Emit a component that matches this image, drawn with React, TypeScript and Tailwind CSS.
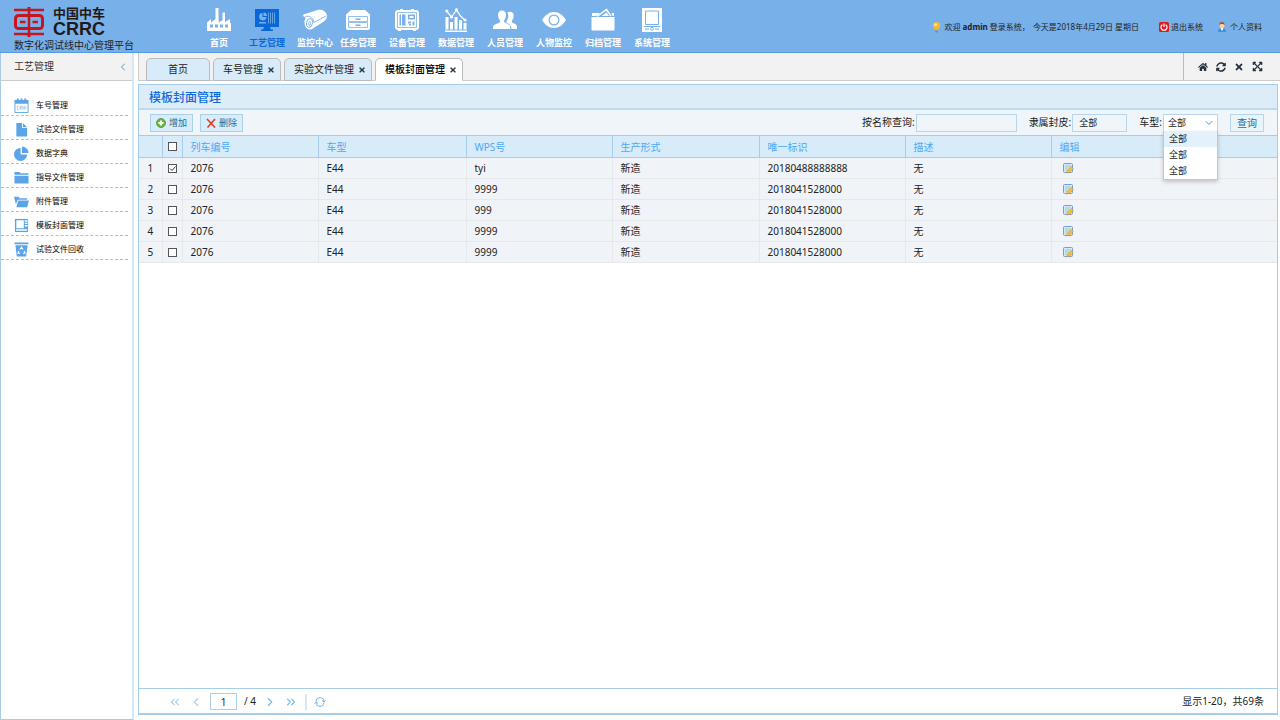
import { useState } from "react";
import type { ReactNode } from "react";
import { FaExpandArrowsAlt, FaHome, FaSyncAlt, FaTimes } from "react-icons/fa";
import { ChevronDown, ChevronLeft, ChevronRight, ChevronsLeft, ChevronsRight } from "lucide-react";

interface Item {
  label: string;
  icon: ReactNode;
}

/* ---------- header icons, 24 x 24 ---------- */

const mainNav: Item[] = [
  {
    label: "首页",
    icon: (
      <path
        fillRule="evenodd"
        d="M0 23v-8.500L4 11v3.500L8.500 11V0h3v11l.5 3.500 3.500-2.500V4.500H18V14l5-3v3.500l1 1V23zM3 16.500v3h3v-3zm5 0v3h3v-3zm5 0v3h3v-3zm5 0v3h3v-3z"
      />
    ),
  },
  {
    label: "工艺管理",
    icon: (
      <>
        <path d="M0 1h24v18H0zM9 19h6l1 2.500h2V23H6v-1.500h2z" />
        <path d="M8.500 4.500V8H12a3.500 3.500 0 0 0-3.500-3.500zM7.500 5a3.700 3.700 0 1 0 4 4h-4zM4 14h7v1.500H4z" fill="#78b0ea" />
        <path d="M13.500 4.500v11M15.500 4.500v11M17.500 4.500v11M19.500 4.500v11" stroke="#78b0ea" strokeWidth=".8" />
      </>
    ),
  },
  {
    label: "监控中心",
    icon: (
      <>
        <path d="M.5 6.500 14.500 2c4-1 8.500 1 9.300 5 .5 2.500-.5 4.500-3 6.500L10 20.500C7 23 2 21 1.500 15.500c-.2-2 .2-4 1.200-6L0 8z" />
        <path d="M2.500 8.500C6 7.500 10 9 11 14.500L23 8" fill="none" stroke="#78b0ea" strokeWidth=".9" />
        <ellipse cx="6.500" cy="15" rx="3" ry="4.500" fill="none" stroke="#78b0ea" strokeWidth=".9" transform="rotate(12 6.500 15)" />
        <ellipse cx="6.500" cy="15.500" rx="1" ry="2" fill="none" stroke="#78b0ea" strokeWidth=".8" transform="rotate(12 6.500 15.500)" />
      </>
    ),
  },
];

const manageNav: Item[] = [
  {
    label: "任务管理",
    icon: (
      <>
        <path d="M5 2h14l5 4.500V20a2 2 0 0 1-2 2H2a2 2 0 0 1-2-2V6.500z" />
        <path d="M2.500 8.500h19v5h-19zM2.500 14.500h19v5h-19z" fill="none" stroke="#78b0ea" strokeWidth=".8" />
        <path d="M9.500 10.500h5v1.500h-5zM9.500 16.500h5V18h-5z" fill="#78b0ea" />
      </>
    ),
  },
  {
    label: "设备管理",
    icon: (
      <>
        <path d="M3 2h2V1h3v1h8V1h3v1h2a3 3 0 0 1 3 3v14a3 3 0 0 1-3 3v1h-3v-1H6v1H3v-1a3 3 0 0 1-3-3V5a3 3 0 0 1 3-3z" />
        <path d="M2.500 4.500h19v15h-19z" fill="none" stroke="#78b0ea" strokeWidth=".8" />
        <path d="M4.500 6.500H6v11H4.500zM7 6.500h3.500v11H7zM13 6.500h7v5h-7zM13 13.500h3v2h-3zM17.500 13.500h2v4h-2zM14 16h2v1.500h-2z" fill="#78b0ea" />
        <path d="M14.500 8h4v2h-4z" />
      </>
    ),
  },
  {
    label: "数据管理",
    icon: (
      <>
        <path d="M1.500 9h3v12.500h-3zM6 14h3v7.500H6zM10.500 9h3v12.500h-3zM15 12h3v9.500h-3zM19.500 15h3v6.500h-3zM1 22.500h22V24H1z" />
        <path d="m2.500 3 5 6 5-7 4 6 4.500 4" fill="none" stroke="currentColor" strokeWidth="1.200" />
        <circle cx="2.800" cy="3" r="1.600" />
        <circle cx="7.500" cy="9" r="1.600" />
        <circle cx="12.500" cy="2" r="1.700" />
        <circle cx="21" cy="12" r="1.600" />
      </>
    ),
  },
  {
    label: "人员管理",
    icon: (
      <>
        <path d="M9 2.500c2.800 0 4.300 2 4 5-.2 2-.8 3.500-1.800 4.500v2c1 1.500 5.300 1.800 5.800 4l.4 3H0c0-3 .3-4 3-5 2-.8 3.500-1.200 4-2.200V12C5.800 11 5.200 9.500 5 7.500c-.2-3 1.300-5 4-5z" />
        <path d="M14.500 4.500c1-.8 2-1 3-.8 2.300.3 3.500 2 3.200 4.500-.2 1.800-.7 3-1.700 4v1.700c.8 1.400 4.700 1.600 5 4.300v2.800h-5.500c0-3.500-1.500-4.700-5-6.300v-1.700c1.200-1.500 1.900-3.500 1.900-5.500z" />
      </>
    ),
  },
  {
    label: "人物监控",
    icon: (
      <>
        <path fillRule="evenodd" d="M0 12C3 7 7 4 12 4s9 3 12 8c-3 5-7 8-12 8S3 17 0 12zm12-5.500a5.500 5.500 0 1 0 0 11 5.500 5.500 0 0 0 0-11z" />
        <circle cx="12" cy="12" r="4.300" />
      </>
    ),
  },
  {
    label: "归档管理",
    icon: (
      <>
        <path d="M.5 9h23v12.500a1 1 0 0 1-1 1h-21a1 1 0 0 1-1-1z" />
        <path d="M1 8V5h8L7.500 6.500 5 8zM20.500 5h2.500v3h-1.500z" />
        <path d="M6 8.500 15.500 1.500 20 8" fill="none" stroke="currentColor" strokeWidth="1.500" />
        <path d="m10.500 8 5-3.500L18 8z" />
      </>
    ),
  },
  {
    label: "系统管理",
    icon: (
      <>
        <path d="M2 0h20v24H2z" />
        <path d="M5.500 3h13v13.500h-13zM4 18.500h16M5 21h4m6 0h4" fill="none" stroke="#78b0ea" />
        <circle cx="12" cy="20.800" r="1.500" fill="none" stroke="#78b0ea" />
      </>
    ),
  },
];

/* ---------- sidebar icons, 16 x 16 ---------- */

const menuItems: Item[] = [
  {
    label: "车号管理",
    icon: (
      <>
        <path d="M.5 2H3V.5h2V2h2V.5h2V2h2V.5h2V2h2.500v4H.5z" />
        <path d="M1 6v9.500h14V6" fill="none" stroke="currentColor" />
        <path d="M5 8.500H3.500v4H5m1.500 0v-4H8v2H6.500L8 12.500m1.500 0v-4m0 2h1.500m0-2v4m1.500 0v-4" fill="none" stroke="currentColor" strokeWidth=".5" />
      </>
    ),
  },
  {
    label: "试验文件管理",
    icon: <path d="M2.500 1h6v5.500h5.500v9H2.500zM9.500 1 14 5.500H9.500z" />,
  },
  {
    label: "数据字典",
    icon: <path d="M7 2v7h7a7 7 0 1 1-7-7zM8.500.5A7 7 0 0 1 15.500 7.500h-7z" />,
  },
  {
    label: "指导文件管理",
    icon: <path d="M.5 2h5.500l1 1.500h8.500V5H.5zM.5 6h15v8.500H.5z" />,
  },
  {
    label: "附件管理",
    icon: <path d="M0 3h5l1 1.500h8V6H4l-2 5zM4.500 7H16l-2 7H2.500z" />,
  },
  {
    label: "模板封面管理",
    icon: (
      <>
        <path d="M1 1h14v14H1z" />
        <path d="M2.500 2.500h8V11h-8zM2 12h12v1.500H2zM11.500 2.500h3V4h-3zM11.500 5h3v1.500h-3zM11.500 7.500h3V9h-3z" fill="#fff" />
      </>
    ),
  },
  {
    label: "试验文件回收",
    icon: (
      <>
        <path d="M.5.5h15v2H.5zM1.500 3.500h13l-1.500 12H3z" />
        <path d="m6.300 8 1.700-2.500L9.700 8M10.800 9.500l1 2.500H9.500m-3 0H4.200l1-2.500" fill="none" stroke="#fff" strokeWidth="1.200" />
      </>
    ),
  },
];

const tabs = [
  { label: "首页", closable: false },
  { label: "车号管理", closable: true },
  { label: "实验文件管理", closable: true },
  { label: "模板封面管理", closable: true },
];

const columns = [
  { label: "列车编号", width: "w-[136px]" },
  { label: "车型", width: "w-[148px]" },
  { label: "WPS号", width: "w-[146px]" },
  { label: "生产形式", width: "w-[147px]" },
  { label: "唯一标识", width: "w-[146px]" },
  { label: "描述", width: "w-[146px]" },
  { label: "编辑", width: "" },
];

const rows = [
  ["2076", "E44", "tyi", "新造", "20180488888888", "无"],
  ["2076", "E44", "9999", "新造", "2018041528000", "无"],
  ["2076", "E44", "999", "新造", "2018041528000", "无"],
  ["2076", "E44", "9999", "新造", "2018041528000", "无"],
  ["2076", "E44", "9999", "新造", "2018041528000", "无"],
];

function Logo() {
  return (
    <svg viewBox="0 0 30 30" className="size-[30px]" fill="none" stroke="#c8141e">
      <path d="M0 3h30M0 27h30" strokeWidth="2.500" />
      <path d="M15 0v4M15 26v4" strokeWidth="3" />
      <rect x="1.500" y="8.500" width="27" height="13" rx="3" strokeWidth="3" />
      <path d="M6 15h5.500M18.500 15H24" strokeWidth="2.500" />
      <path d="M15 4v22" strokeWidth="2.500" />
    </svg>
  );
}

function EditIcon() {
  return (
    <svg viewBox="0 0 11 11" className="size-[11px]">
      <rect x=".5" y=".5" width="9" height="9" rx="1" fill="#d5e8fa" stroke="#6f9fd8" />
      <path d="M2 3h6M2 5h5M2 7h3" stroke="#a4cf9a" strokeWidth="1" />
      <path d="m3.500 10 1-2.500 4-4L10.500 5.500l-4 4z" fill="#f8bd3f" stroke="#b07a2a" strokeWidth=".4" />
    </svg>
  );
}

function CheckBox({ label, checked, onChange }: { label: string; checked: boolean; onChange: () => void }) {
  return (
    <span className="relative mx-auto block size-[9px]">
      <input
        type="checkbox"
        aria-label={label}
        checked={checked}
        onChange={onChange}
        className="block size-[9px] appearance-none border border-[#555] bg-white"
      />
      {checked && (
        <svg viewBox="0 0 9 9" className="pointer-events-none absolute inset-0" fill="none" stroke="#333">
          <path d="m2 4.500 2 2 3.500-4" />
        </svg>
      )}
    </span>
  );
}

function NavGroup({ items, className }: { items: Item[]; className: string }) {
  return (
    <div className={`flex ${className}`}>
      {items.map((item) => (
        <a
          key={item.label}
          href="#"
          className={`flex w-9 flex-col items-center ${item.label === "工艺管理" ? "text-[#0968d8]" : "text-white"}`}
        >
          <svg viewBox="0 0 24 24" className="size-6" fill="currentColor">
            {item.icon}
          </svg>
          <span className="mt-1 whitespace-nowrap text-[9px] font-bold leading-[14px]">{item.label}</span>
        </a>
      ))}
    </div>
  );
}

function Header() {
  return (
    <header className="flex h-[53px] shrink-0 border-b border-[#5599e4] bg-[#78b0ea]">
      <div className="w-[201px] shrink-0 pl-[14px] pt-[7px]">
        <div className="flex h-[30px] gap-[9px]">
          <Logo />
          <div className="text-[#231815]">
            <div className="font-['Noto_Sans_CJK_SC'] text-[13px] font-bold leading-[12px]">中国中车</div>
            <div className="font-['Liberation_Sans'] text-[18px] font-bold leading-[20px]">CRRC</div>
          </div>
        </div>
        <div className="whitespace-nowrap text-[10px] leading-[16px] text-[#222]">数字化调试线中心管理平台</div>
      </div>

      <nav className="flex gap-[7px] pt-2">
        <NavGroup items={mainNav} className="gap-3" />
        <NavGroup items={manageNav} className="gap-[13px]" />
      </nav>

      <div className="ml-auto flex items-center whitespace-nowrap pr-[18px] pt-0.5 text-[8px] text-[#222]">
        <svg viewBox="0 0 10 12" className="mr-[3px] h-[11px] w-[9px]">
          <path d="M5 0a4 4 0 0 1 4 4c0 2-2 3-2 4.500H3C3 7 1 6 1 4a4 4 0 0 1 4-4z" fill="#fdb827" />
          <circle cx="4" cy="3" r="1.500" fill="#fff0a0" />
          <path d="M3.300 9h3.400v2L5 12l-1.700-1z" fill="#8a8f96" />
        </svg>
        <span className="mr-[3px]">
          欢迎 <b>admin</b> 登录系统，
        </span>
        <span>今天是2018年4月29日 星期日</span>
        <a href="#" className="ml-5 flex items-center gap-[2px]">
          <svg viewBox="0 0 10 10" className="size-[10px]" fill="none" stroke="#fff" strokeWidth="1.200">
            <rect width="10" height="10" rx="1.500" fill="#dc1c1c" stroke="none" />
            <path d="M3.300 2.800a3 3 0 1 0 3.400 0M5 1.500V5" />
          </svg>
          退出系统
        </a>
        <a href="#" className="ml-[14px] flex items-center gap-[3px]">
          <svg viewBox="0 0 10 10" className="size-[10px]">
            <path d="M.8 10c0-3 1.700-4 4.200-4s4.200 1 4.200 4z" fill="#4a90d9" />
            <path d="m3.500 6 1.500 3 1.500-3z" fill="#fff" />
            <circle cx="5" cy="3.400" r="2.500" fill="#fbd3a4" />
            <path d="M2.400 3.500C2.200 1 3.500 0 5 0s2.800 1 2.600 3.500C7 2 6 2 5 2s-2 0-2.600 1.500z" fill="#a5521b" />
          </svg>
          个人资料
        </a>
      </div>
    </header>
  );
}

function Sidebar() {
  return (
    <aside className="flex w-[134px] shrink-0 flex-col border-b border-l border-r-2 border-b-[#a5cdeb] border-l-[#a5cdeb] border-r-[#d4e8f6]">
      <div className="flex h-7 items-center justify-between border-b border-[#ccc] bg-[#f2f2f2] pl-[13px] pr-[3px]">
        <h2 className="text-[10px] text-[#333]">工艺管理</h2>
        <button type="button" aria-label="收起菜单" className="text-[#4a9be8]">
          <ChevronLeft size={12} />
        </button>
      </div>
      <ul className="mr-1 mt-[11px]">
        {menuItems.map((item) => (
          <li key={item.label} className="border-b border-dashed border-[#bbb]">
            <a href="#" className="flex h-[23px] items-center gap-[7px] pl-[13px] pt-[3px] text-[8px] text-black">
              <svg viewBox="0 0 16 16" className="size-[15px] text-[#5ba4e8]" fill="currentColor">
                {item.icon}
              </svg>
              {item.label}
            </a>
          </li>
        ))}
      </ul>
    </aside>
  );
}

function TabBar() {
  const [active, setActive] = useState("模板封面管理");

  return (
    <div className="flex h-7 shrink-0 items-stretch border-b border-l border-[#ccc] bg-[#f2f2f2]">
      <div role="tablist" className="-mb-px flex gap-[3px] pl-[7px] pt-[5px]">
        {tabs.map((tab) => (
          <div
            key={tab.label}
            className={`flex items-center rounded-t-[5px] border border-[#bbb] text-[10px] ${
              tab.label === active ? "border-b-white bg-white font-medium text-black" : "bg-[#d8ebf8] text-[#222]"
            } ${tab.closable ? "gap-[4px] pl-[9px] pr-[5px]" : "px-[21px]"}`}
          >
            <button type="button" role="tab" aria-selected={tab.label === active} onClick={() => setActive(tab.label)}>
              {tab.label}
            </button>
            {tab.closable && (
              <button type="button" aria-label={`关闭${tab.label}`} className="text-[#2b3a4a]">
                <FaTimes size={8} />
              </button>
            )}
          </div>
        ))}
      </div>
      <div className="ml-auto flex items-center gap-2 border-l border-[#bbb] pl-[14px] pr-[17px] text-[#26303f]">
        <button type="button" aria-label="主页">
          <FaHome size={10} />
        </button>
        <button type="button" aria-label="刷新">
          <FaSyncAlt size={10} />
        </button>
        <button type="button" aria-label="关闭">
          <FaTimes size={10} />
        </button>
        <button type="button" aria-label="全屏">
          <FaExpandArrowsAlt size={11} />
        </button>
      </div>
    </div>
  );
}

function Toolbar() {
  return (
    <div className="flex h-[25px] shrink-0 items-center bg-[#f0f5f9] pl-[11px] pr-[13px] text-[10px] text-[#222]">
      <button type="button" className="flex h-[18px] items-center gap-[3px] border border-[#a9d1ec] bg-[#d9ecf9] px-[5px] text-[9px] text-[#286a94]">
        <svg viewBox="0 0 10 10" className="size-[10px]">
          <circle cx="5" cy="5" r="4.500" fill="#6cb84c" stroke="#4b9233" strokeWidth=".8" />
          <path d="M5 2.500v5M2.500 5h5" stroke="#fff" strokeWidth="1.800" />
        </svg>
        增加
      </button>
      <button type="button" className="ml-[7px] flex h-[18px] items-center gap-[3px] border border-[#a9d1ec] bg-[#d9ecf9] px-[5px] text-[9px] text-[#286a94]">
        <svg viewBox="0 0 10 10" className="size-[10px]">
          <path d="m1 1 8 8.500M9 1 1.500 9.500" stroke="#e03a1c" strokeWidth="1.500" />
        </svg>
        删除
      </button>

      <label htmlFor="name" className="ml-auto">
        按名称查询:
      </label>
      <input id="name" type="text" className="ml-px h-[18px] w-[101px] border border-[#b5d6ee] bg-[#f0f5f9] px-1.5 text-[9px] outline-none" />
      <label htmlFor="cover" className="ml-3">
        隶属封皮:
      </label>
      <input
        id="cover"
        type="text"
        defaultValue="全部"
        className="ml-px h-[18px] w-[55px] border border-[#b5d6ee] bg-[#f0f5f9] px-1.5 text-[9px] outline-none"
      />
      <label htmlFor="model" className="ml-3">
        车型:
      </label>
      <div className="relative ml-px">
        <select id="model" className="block h-[18px] w-[55px] appearance-none border border-[#b5d6ee] bg-white px-1 text-[9px] outline-none">
          <option>全部</option>
        </select>
        <ChevronDown size={12} className="pointer-events-none absolute right-[3px] top-[3px] text-[#4a9be8]" />
        <ul role="listbox" className="absolute left-0 top-[17px] z-10 w-[55px] border border-t-0 border-[#a9cfec] bg-white text-[9px] leading-[16px] shadow-[0_2px_4px_rgba(0,0,0,0.2)]">
          <li role="option" aria-selected="true" className="bg-[#e3f1fb] px-[5px]">
            全部
          </li>
          <li role="option" aria-selected="false" className="px-[5px]">
            全部
          </li>
          <li role="option" aria-selected="false" className="px-[5px]">
            全部
          </li>
        </ul>
      </div>
      <button type="button" className="ml-[12px] h-[18px] w-[34px] border border-[#b5d6ee] bg-[#e9f4fb] text-[10px] leading-[16px] text-[#286a94]">
        查询
      </button>
    </div>
  );
}

function DataTable() {
  const [selected, setSelected] = useState<number[]>([0]);
  const all = selected.length === rows.length;

  const toggle = (index: number) =>
    setSelected((prev) => (prev.includes(index) ? prev.filter((i) => i !== index) : [...prev, index]));

  return (
    <table className="w-full table-fixed border-collapse text-left text-[10px] leading-[14px]">
      <thead>
        <tr className="h-[22px] border-y border-[#a5cdeb] bg-[#d8ebf9] text-[#4da9f5]">
          <th className="w-[23px] border-r border-[#a5cdeb]" />
          <th className="w-5 border-r border-[#a5cdeb]">
            <CheckBox label="全选" checked={all} onChange={() => setSelected(all ? [] : rows.map((_, i) => i))} />
          </th>
          {columns.map((col) => (
            <th key={col.label} className={`border-r border-[#a5cdeb] pl-2 font-normal last:border-r-0 ${col.width}`}>
              {col.label}
            </th>
          ))}
        </tr>
      </thead>
      <tbody>
        {rows.map((row, index) => (
          <tr key={index} className="h-[21px] border-b border-[#e6e8ea] bg-[#f0f4f8] text-[#222]">
            <td className="border-r border-[#e6e8ea] text-center">{index + 1}</td>
            <td className="border-r border-[#e6e8ea]">
              <CheckBox label={`选择第${index + 1}行`} checked={selected.includes(index)} onChange={() => toggle(index)} />
            </td>
            {row.map((cell, i) => (
              <td key={i} className="border-r border-[#e6e8ea] pl-2">
                {cell}
              </td>
            ))}
            <td className="pl-[11px]">
              <button type="button" aria-label="编辑" className="block">
                <EditIcon />
              </button>
            </td>
          </tr>
        ))}
      </tbody>
    </table>
  );
}

function Pagination() {
  return (
    <footer className="flex h-[25px] shrink-0 items-center border-t border-[#a5cdeb] pl-[29px] pr-[13px] pt-px text-[10px] text-[#222]">
      <div className="flex items-center gap-[7px] text-[#7ab8e8]">
        <button type="button" aria-label="第一页" className="text-[#a9d0ee]">
          <ChevronsLeft size={14} />
        </button>
        <button type="button" aria-label="上一页" className="text-[#a9d0ee]">
          <ChevronLeft size={14} />
        </button>
        <input
          type="text"
          aria-label="页码"
          defaultValue="1"
          className="h-[17px] w-[27px] border border-[#a9d1ec] text-center text-[10px] text-[#222] outline-none"
        />
        <span className="text-[#222]">/ 4</span>
        <button type="button" aria-label="下一页">
          <ChevronRight size={14} />
        </button>
        <button type="button" aria-label="最后一页">
          <ChevronsRight size={14} />
        </button>
        <span className="h-4 border-l-2 border-[#d4e8f6]" />
        <button type="button" aria-label="刷新">
          <svg viewBox="0 0 12 12" className="size-3" fill="none" stroke="currentColor">
            <path d="M2 5.500a4 4 0 0 1 8 0M10 6.500a4 4 0 0 1-8 0M8 4.500l2 1.500 1.500-1.500M.5 7.500 2 6l2 1.500" />
          </svg>
        </button>
      </div>
      <span className="ml-auto">显示1-20，共69条</span>
    </footer>
  );
}

export default function App() {
  return (
    <div className="flex h-screen flex-col bg-white font-['Noto_Sans','Noto_Sans_CJK_SC',sans-serif]">
      <Header />
      <div className="flex min-h-0 flex-1">
        <Sidebar />
        <div className="flex min-w-0 flex-1 flex-col pl-1">
          <TabBar />
          <main className="mb-[5px] mr-0.5 mt-[3px] flex min-h-0 flex-1 flex-col border border-b-2 border-[#a5cdeb]">
            <h1 className="h-[25px] shrink-0 border-b-2 border-[#bcdaf0] bg-[#deecf8] pl-[10px] text-[12px] font-medium leading-[25px] text-[#0f6be0]">
              模板封面管理
            </h1>
            <Toolbar />
            <div className="min-h-0 flex-1">
              <DataTable />
            </div>
            <Pagination />
          </main>
        </div>
      </div>
    </div>
  );
}
